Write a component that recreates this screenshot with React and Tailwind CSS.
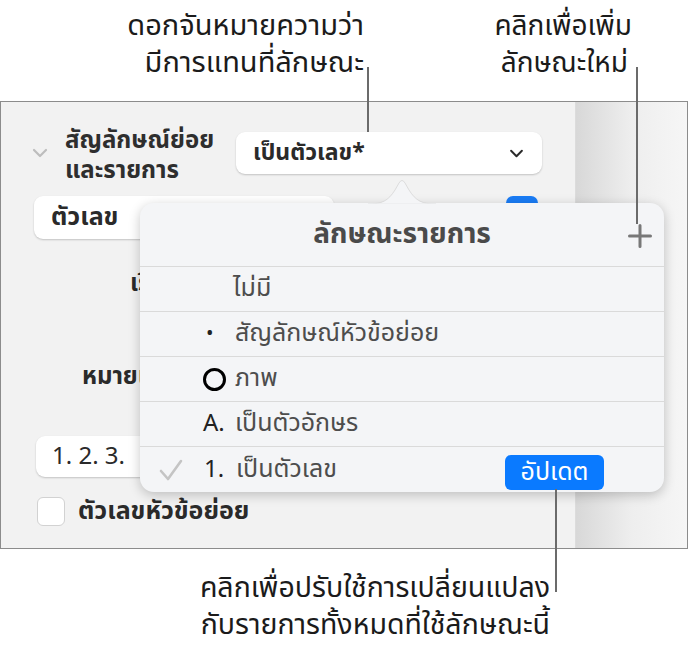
import React from 'react';

const Chevron = ({ className }) => (
  <svg viewBox="0 0 16 10" className={className} fill="none" stroke="currentColor" strokeWidth="2.2" strokeLinecap="round" strokeLinejoin="round">
    <path d="M2 2l6 6 6-6" />
  </svg>
);

const Row = ({ children, last }) => (
  <div className={`h-[45px] flex items-center relative ${last ? '' : 'border-b border-[#dadada]'}`}>
    {children}
  </div>
);

export default function App() {
  return (
    <div
      className="relative w-[689px] h-[646px] bg-white overflow-hidden text-[#1b1b1b]"
      style={{ fontFamily: '"Noto Sans Thai", "Noto Sans", "Liberation Sans", sans-serif' }}
    >
      {/* top callouts */}
      <div className="h-[101px] flex">
        <div className="w-[364px] pt-[8px] text-right text-[29px] leading-[37px] whitespace-nowrap">
          <div>ดอกจันหมายความว่า</div>
          <div>มีการแทนที่ลักษณะ</div>
        </div>
        <div className="w-[268px] pt-[8px] text-right text-[28px] leading-[37px] whitespace-nowrap">
          <div>คลิกเพื่อเพิ่ม</div>
          <div className="pr-[4px]">ลักษณะใหม่</div>
        </div>
      </div>

      {/* sidebar panel */}
      <div className="h-[448px] w-[688px] border-[1.5px] border-[#8c8c8c] flex">
        <div className="w-[575px] bg-[#f2f2f2] border-r border-[#dcdcdc] pl-[31px]">
          <div className="flex items-start pt-[24px]">
            <Chevron className="w-[16px] h-[10px] text-[#bdbdbd] mt-[22px] mr-[17px]" />
            <div className="w-[171px] text-[24px] font-bold leading-[30px] text-[#2e2e2e] whitespace-nowrap">
              <div>สัญลักษณ์ย่อย</div>
              <div>และรายการ</div>
            </div>
            <div className="mt-[6px] w-[306px] h-[42px] bg-white rounded-[9px] shadow-[0_1px_2px_rgba(0,0,0,0.2)] flex items-center justify-between pl-[17px] pr-[18px]">
              <span className="text-[23px] font-bold text-[#2a2a2a]">เป็นตัวเลข*</span>
              <Chevron className="w-[15px] h-[9px] text-[#2a2a2a]" />
            </div>
          </div>

          <div className="flex items-start mt-[10px] h-[43px]">
            <div className="ml-[2px] w-[300px] h-[43px] bg-white rounded-[9px] shadow-[0_1px_2px_rgba(0,0,0,0.2)] flex items-center pl-[17px]">
              <span className="text-[25px] font-bold text-[#2a2a2a]">ตัวเลข</span>
            </div>
            <div className="ml-[172px] w-[32px] h-[30px] rounded-[7px] bg-[#1a7cf5]" />
          </div>

          <div className="mt-[30px] pl-[98px] h-[30px] text-[24px] font-bold text-[#2a2a2a] leading-[30px] whitespace-nowrap">เริ่มต้นที่</div>

          <div className="mt-[63px] pl-[50px] h-[30px] text-[24px] font-bold text-[#2a2a2a] leading-[30px] whitespace-nowrap">หมายเลข</div>

          <div className="mt-[44px] w-[300px] h-[41px] ml-[4px] bg-white rounded-[9px] shadow-[0_1px_2px_rgba(0,0,0,0.2)] flex items-center pl-[16px]">
            <span className="text-[24px] text-[#2a2a2a]">1. 2. 3.</span>
          </div>

          <div className="mt-[19px] flex items-center ml-[5px]">
            <div className="w-[28px] h-[29px] bg-white rounded-[6px] border border-[#d2d2d2]" />
            <span className="ml-[13px] text-[25px] font-bold text-[#2a2a2a] leading-[30px]">ตัวเลขหัวข้อย่อย</span>
          </div>
        </div>
        <div className="flex-1 bg-gradient-to-r from-[#d8d8d8] via-[#eeeeee] to-[#f6f6f6]" />
      </div>

      {/* bottom callout */}
      <div className="pt-[21px] w-[550px] text-right text-[28.5px] leading-[37px] whitespace-nowrap">
        <div>คลิกเพื่อปรับใช้การเปลี่ยนแปลง</div>
        <div>กับรายการทั้งหมดที่ใช้ลักษณะนี้</div>
      </div>

      {/* popover */}
      <div className="absolute left-[140px] top-[203px] w-[524px] h-[289px] rounded-[14px] bg-[#f4f5f7] shadow-[0_3px_12px_rgba(0,0,0,0.22)]">
        <svg className="absolute left-[228px] top-[-25px]" width="68" height="27" viewBox="0 0 68 27">
          <path d="M0 26 C14 26 20 23 27 12 L31 5 Q34 0 37 5 L41 12 C48 23 54 26 68 26 Z" fill="#f4f5f7" stroke="#d6d6d6" strokeWidth="0.8" />
          <rect x="0" y="25.5" width="68" height="2" fill="#f4f5f7" />
        </svg>
        <div className="h-[64px] flex items-center justify-center border-b border-[#dadada] relative">
          <span className="text-[28px] font-bold text-[#4a4a4a]">ลักษณะรายการ</span>
          <svg className="absolute left-[488px] top-[21px]" width="24" height="24" viewBox="0 0 24 24">
            <path d="M12 1.5v21M1.5 12h21" stroke="#787878" strokeWidth="3" strokeLinecap="round" />
          </svg>
        </div>
        <Row>
          <span className="ml-[93px] text-[25px] text-[#4d4d4d]">ไม่มี</span>
        </Row>
        <Row>
          <span className="ml-[66px] w-[29px] text-[20px] text-[#222]">•</span>
          <span className="text-[25px] text-[#4d4d4d]">สัญลักษณ์หัวข้อย่อย</span>
        </Row>
        <Row>
          <span className="ml-[63px] w-[23px] h-[23px] rounded-full border-[3.5px] border-black mr-[9px]" />
          <span className="text-[25px] text-[#4d4d4d]">ภาพ</span>
        </Row>
        <Row>
          <span className="ml-[63px] w-[32px] text-[24px] text-[#222]">A.</span>
          <span className="text-[25px] text-[#4d4d4d]">เป็นตัวอักษร</span>
        </Row>
        <Row last>
          <svg className="ml-[19px] mr-[21px]" width="24" height="22" viewBox="0 0 24 22">
            <path d="M2 12l7 8L22 2" stroke="#c4c4c4" strokeWidth="2.6" fill="none" strokeLinecap="round" strokeLinejoin="round" />
          </svg>
          <span className="w-[32px] text-[24px] text-[#222]">1.</span>
          <span className="text-[25px] text-[#4d4d4d]">เป็นตัวเลข</span>
          <span className="ml-auto mr-[60px] mt-[6px] h-[35px] w-[99px] rounded-[6px] bg-[#0a7aff] text-white text-[25px] flex items-center justify-center">อัปเดต</span>
        </Row>
      </div>

      {/* callout lines */}
      <div className="absolute left-[367px] top-[67px] w-[2px] h-[65px] bg-[#6b6b6b]" />
      <div className="absolute left-[636px] top-[67px] w-[2px] h-[157px] bg-[#6b6b6b]" />
      <div className="absolute left-[555px] top-[489px] w-[2px] h-[103px] bg-[#6b6b6b]" />
    </div>
  );
}
